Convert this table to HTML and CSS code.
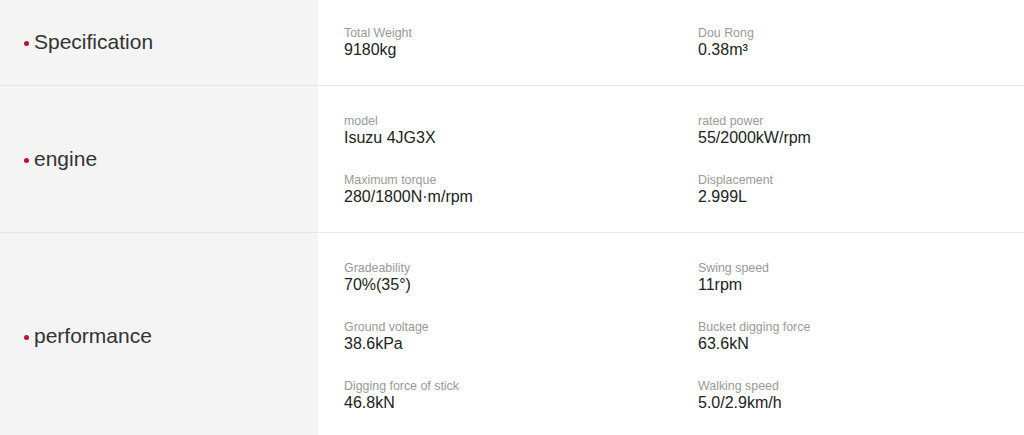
FILE: index.html
```html
<!DOCTYPE html>
<html>
<head>
<meta charset="utf-8">
<link rel="stylesheet" href="styles.css">
</head>
<body>
<div class="spec">
  <div class="row">
    <div class="cat"><span class="dot"></span>Specification</div>
    <div class="items">
      <div class="item"><div class="label">Total Weight</div><div class="value">9180kg</div></div>
      <div class="item"><div class="label">Dou Rong</div><div class="value">0.38m³</div></div>
    </div>
  </div>
  <div class="row">
    <div class="cat"><span class="dot"></span>engine</div>
    <div class="items">
      <div class="item"><div class="label">model</div><div class="value">Isuzu 4JG3X</div></div>
      <div class="item"><div class="label">rated power</div><div class="value">55/2000kW/rpm</div></div>
      <div class="item"><div class="label">Maximum torque</div><div class="value">280/1800N·m/rpm</div></div>
      <div class="item"><div class="label">Displacement</div><div class="value">2.999L</div></div>
    </div>
  </div>
  <div class="row">
    <div class="cat"><span class="dot"></span>performance</div>
    <div class="items">
      <div class="item"><div class="label">Gradeability</div><div class="value">70%(35°)</div></div>
      <div class="item"><div class="label">Swing speed</div><div class="value">11rpm</div></div>
      <div class="item"><div class="label">Ground voltage</div><div class="value">38.6kPa</div></div>
      <div class="item"><div class="label">Bucket digging force</div><div class="value">63.6kN</div></div>
      <div class="item"><div class="label">Digging force of stick</div><div class="value">46.8kN</div></div>
      <div class="item"><div class="label">Walking speed</div><div class="value">5.0/2.9km/h</div></div>
    </div>
  </div>
</div>
</body>
</html>
```
FILE: styles.css
```css
html, body {
  margin: 0;
  padding: 0;
  background: #fff;
  font-family: "Liberation Sans", Arial, sans-serif;
}
.spec {
  width: 1024px;
  margin-top: -2px;
}
.row {
  display: flex;
  border-bottom: 1px solid #e6e6e6;
}
.cat {
  width: 318px;
  flex: none;
  background: #f4f4f4;
  display: flex;
  align-items: center;
  padding-left: 24px;
  box-sizing: border-box;
  font-size: 21px;
  color: #333;
}
.dot {
  width: 5px;
  height: 5px;
  border-radius: 50%;
  background: #c0102a;
  margin-right: 5px;
  margin-top: 3px;
}
.items {
  flex: 1;
  display: grid;
  grid-template-columns: 354px 1fr;
  row-gap: 25px;
  padding: 27px 0 26px 26px;
}
.label {
  font-size: 12.4px;
  line-height: 16px;
  color: #999;
}
.value {
  font-size: 16px;
  line-height: 18px;
  color: #222;
}
```
